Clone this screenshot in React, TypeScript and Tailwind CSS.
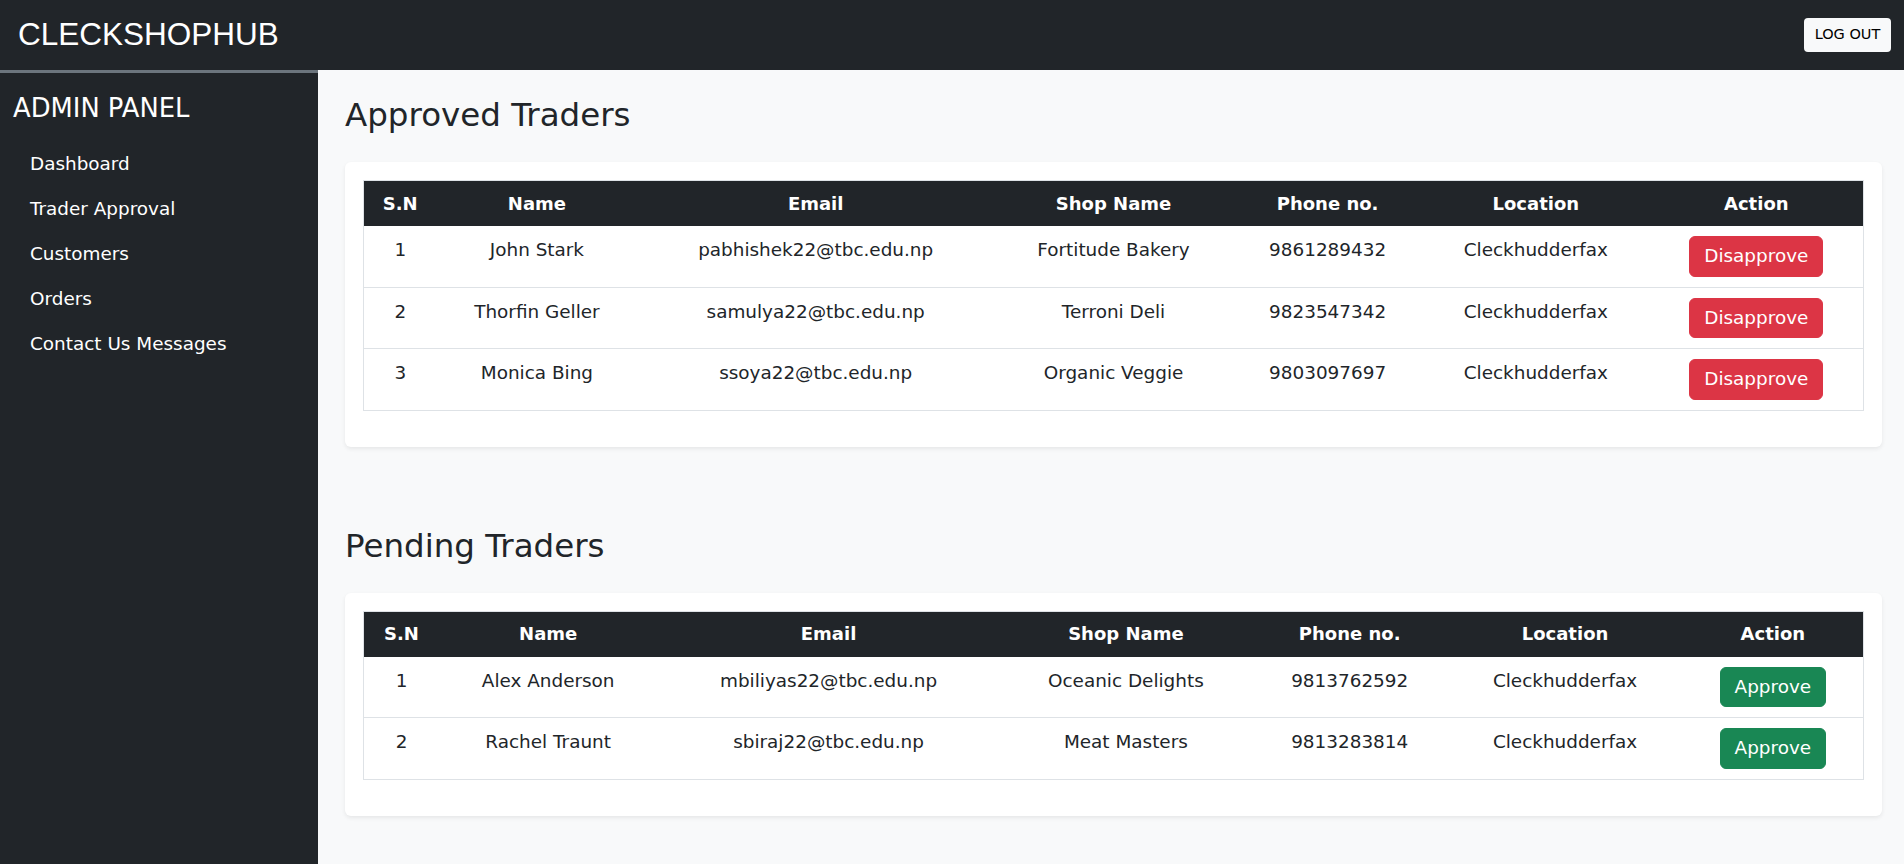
import React from "react";

type Trader = {
  name: string;
  email: string;
  shop: string;
  phone: string;
  location: string;
};

const approved: Trader[] = [
  { name: "John Stark", email: "pabhishek22@tbc.edu.np", shop: "Fortitude Bakery", phone: "9861289432", location: "Cleckhudderfax" },
  { name: "Thorfin Geller", email: "samulya22@tbc.edu.np", shop: "Terroni Deli", phone: "9823547342", location: "Cleckhudderfax" },
  { name: "Monica Bing", email: "ssoya22@tbc.edu.np", shop: "Organic Veggie", phone: "9803097697", location: "Cleckhudderfax" },
];

const pending: Trader[] = [
  { name: "Alex Anderson", email: "mbiliyas22@tbc.edu.np", shop: "Oceanic Delights", phone: "9813762592", location: "Cleckhudderfax" },
  { name: "Rachel Traunt", email: "sbiraj22@tbc.edu.np", shop: "Meat Masters", phone: "9813283814", location: "Cleckhudderfax" },
];

const headers = ["S.N", "Name", "Email", "Shop Name", "Phone no.", "Location", "Action"];

const navLinks = ["Dashboard", "Trader Approval", "Customers", "Orders", "Contact Us Messages"];

/* ── Table ─────────────────────────────────────────────── */

function TraderTable({ rows, approvedList }: { rows: Trader[]; approvedList: boolean }) {
  return (
    <div className="bg-white rounded-[6px] shadow-[0_2px_4px_rgba(0,0,0,0.075)] px-[18px] pt-[18px] pb-[36px]">
      <table className="w-full border border-[#dee2e6] text-[18.4px] leading-[27.6px] text-[#212529]">
        <thead>
          <tr className="bg-[#212529] text-white">
            {headers.map((h) => (
              <th key={h} className="px-2 py-[8.5px] font-bold text-center text-[18px]">
                {h}
              </th>
            ))}
          </tr>
        </thead>
        <tbody>
          {rows.map((r, i) => (
            <tr key={r.email} className="border-b border-[#dee2e6] align-top">
              <td className="px-2 pt-[10px] text-center">{i + 1}</td>
              <td className="px-2 pt-[10px] text-center">{r.name}</td>
              <td className="px-2 pt-[10px] text-center">{r.email}</td>
              <td className="px-2 pt-[10px] text-center">{r.shop}</td>
              <td className="px-2 pt-[10px] text-center">{r.phone}</td>
              <td className="px-2 pt-[10px] text-center">{r.location}</td>
              <td className="px-2 py-[10px] text-center">
                {approvedList ? (
                  <button className="h-[40.5px] px-[14px] rounded-[6px] border border-[#dc3545] bg-[#dc3545] text-white">
                    Disapprove
                  </button>
                ) : (
                  <button className="h-[40.5px] px-[14px] rounded-[6px] border border-[#198754] bg-[#198754] text-white">
                    Approve
                  </button>
                )}
              </td>
            </tr>
          ))}
        </tbody>
      </table>
    </div>
  );
}

/* ── Page ──────────────────────────────────────────────── */

export default function App() {
  return (
    <div className="min-h-screen flex flex-col bg-[#f8f9fa] font-['DejaVu_Sans',sans-serif]">
      {/* Navbar */}
      <header className="h-[70px] shrink-0 bg-[#212529] flex items-center justify-between pl-[18px] pr-[13px]">
        <span className="font-['Liberation_Sans',Arial,sans-serif] text-[31.5px] text-white leading-none">
          CLECKSHOPHUB
        </span>
        <button className="h-[34px] w-[87px] rounded-[4px] bg-[#f8f9fa] text-black text-[14.5px]">
          LOG OUT
        </button>
      </header>

      <div className="flex flex-1">
        {/* Sidebar */}
        <aside className="w-[318px] shrink-0 bg-[#212529] border-t-[3px] border-[#6c757d] pt-[20px]">
          <h3 className="pl-[13px] text-[25.8px] leading-[30.6px] font-medium text-white">ADMIN PANEL</h3>
          <ul className="mt-[18px]">
            {navLinks.map((l) => (
              <li
                key={l}
                className="h-[45px] flex items-center pl-[30px] text-[18.4px] leading-[27.6px] text-white"
              >
                {l}
              </li>
            ))}
          </ul>
        </aside>

        {/* Main */}
        <main className="flex-1 pl-[27px] pr-[22px] pt-[26px] pb-[48px]">
          <h2 className="text-[32.5px] leading-[38.4px] text-[#212529] mb-[28px]">Approved Traders</h2>
          <TraderTable rows={approved} approvedList />

          <h2 className="text-[32.5px] leading-[38.4px] text-[#212529] mt-[80px] mb-[28px]">Pending Traders</h2>
          <TraderTable rows={pending} approvedList={false} />
        </main>
      </div>
    </div>
  );
}
